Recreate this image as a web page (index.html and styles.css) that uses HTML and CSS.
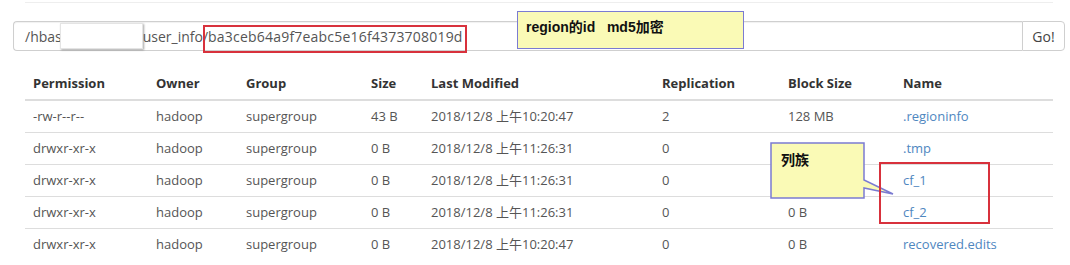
FILE: index.html
```html
<!DOCTYPE html>
<html lang="zh">
<head>
<meta charset="utf-8">
<title>HDFS Browse Directory</title>
<link rel="stylesheet" href="styles.css">
</head>
<body>
<div class="container">
  <div class="rule"></div>
  <div class="input-group">
    <div class="path-input"><span>/hbas</span><span class="redact"></span><span>user_info/</span><span class="hash">ba3ceb64a9f7eabc5e16f4373708019d</span></div>
    <button class="go-btn" type="button">Go!</button>
    <div class="mark mark-hash"></div>
    <div class="note note-region">region的id   md5加密</div>
  </div>
  <div class="table-wrap">
    <table class="listing">
      <colgroup>
        <col style="width:123px"><col style="width:90px"><col style="width:125px"><col style="width:60px">
        <col style="width:231px"><col style="width:126px"><col style="width:115px"><col style="width:158px">
      </colgroup>
      <thead>
        <tr><th>Permission</th><th>Owner</th><th>Group</th><th>Size</th><th>Last Modified</th><th>Replication</th><th>Block Size</th><th>Name</th></tr>
      </thead>
      <tbody>
        <tr><td>-rw-r--r--</td><td>hadoop</td><td>supergroup</td><td>43 B</td><td>2018/12/8 上午10:20:47</td><td>2</td><td>128 MB</td><td><a href="#">.regioninfo</a></td></tr>
        <tr><td>drwxr-xr-x</td><td>hadoop</td><td>supergroup</td><td>0 B</td><td>2018/12/8 上午11:26:31</td><td>0</td><td>0 B</td><td><a href="#">.tmp</a></td></tr>
        <tr><td>drwxr-xr-x</td><td>hadoop</td><td>supergroup</td><td>0 B</td><td>2018/12/8 上午11:26:31</td><td>0</td><td>0 B</td><td><a href="#">cf_1</a></td></tr>
        <tr><td>drwxr-xr-x</td><td>hadoop</td><td>supergroup</td><td>0 B</td><td>2018/12/8 上午11:26:31</td><td>0</td><td>0 B</td><td><a href="#">cf_2</a></td></tr>
        <tr><td>drwxr-xr-x</td><td>hadoop</td><td>supergroup</td><td>0 B</td><td>2018/12/8 上午10:20:47</td><td>0</td><td>0 B</td><td><a href="#">recovered.edits</a></td></tr>
      </tbody>
    </table>
    <svg class="note-cf" width="126" height="58" viewBox="0 0 126 58" aria-hidden="true">
      <path d="M1 1 H94 V38 L123 52 L94 46 V56 H1 Z" fill="#fafab6" stroke="#7b7bd2" stroke-width="1.5" stroke-linejoin="miter"/>
    </svg>
    <div class="note-cf-text">列族</div>
    <div class="mark mark-cf"></div>
  </div>
</div>
</body>
</html>
```

FILE: styles.css
```css
* { box-sizing: border-box; }

html, body {
  margin: 0;
  padding: 0;
  background: #fff;
}

body {
  font-family: "Open Sans", "Noto Sans CJK SC", sans-serif;
  font-size: 13px;
  color: #555;
}

.container {
  width: 1028px;
  margin-left: 25px;
}

.rule {
  margin-top: 2px;
  border-top: 1px solid #eeeeee;
}

.input-group {
  position: relative;
  display: flex;
  height: 30px;
  margin: 18px -12px 0 -12px;
}

.path-input {
  flex: 1;
  display: flex;
  align-items: center;
  border: 1px solid #cfcfcf;
  border-right: none;
  border-radius: 4px 0 0 4px;
  padding: 0 11px;
  font-size: 14px;
  color: #555;
  white-space: nowrap;
  box-shadow: inset 0 1px 1px rgba(0, 0, 0, 0.06);
}

.hash {
  letter-spacing: 0.2px;
}

.redact {
  display: inline-block;
  width: 83px;
  height: 26px;
  margin-left: -2px;
  background: #fff;
  border: 1px solid #e4e4e4;
  box-shadow: 1px 1px 2px rgba(0, 0, 0, 0.35);
}

.go-btn {
  width: 43px;
  border: 1px solid #cfcfcf;
  border-radius: 0 4px 4px 0;
  background: #fff;
  font-family: "Open Sans", sans-serif;
  font-size: 14px;
  color: #444;
  padding: 0;
}

.mark {
  position: absolute;
  border: 2px solid #d8313c;
}

.mark-hash {
  left: 190px;
  top: 4px;
  width: 264px;
  height: 28px;
}

.note-region {
  position: absolute;
  left: 504px;
  top: -10px;
  width: 227px;
  height: 38px;
  background: #fafab6;
  border: 1.5px solid #7b7bd2;
  padding: 4px 0 0 8px;
  font-family: "Liberation Sans", "Noto Sans CJK SC", sans-serif;
  font-weight: bold;
  font-size: 14px;
  color: #111;
  white-space: pre;
}

.table-wrap {
  position: relative;
  margin-top: 18px;
}

.listing {
  width: 1028px;
  table-layout: fixed;
  border-collapse: collapse;
  border-spacing: 0;
}

.listing th,
.listing td {
  text-align: left;
  padding: 8px 8px;
  line-height: 15px;
  white-space: nowrap;
}

.listing th {
  padding-top: 7px;
  font-weight: bold;
  color: #333;
  border-bottom: 2px solid #dddddd;
}

.listing tbody tr + tr td {
  border-top: 1px solid #dddddd;
}

.listing a {
  color: #4f87bf;
  text-decoration: none;
}

.note-cf {
  position: absolute;
  left: 745px;
  top: 73px;
}

.note-cf-text {
  position: absolute;
  left: 756px;
  top: 80px;
  font-family: "Liberation Sans", "Noto Sans CJK SC", sans-serif;
  font-weight: bold;
  font-size: 14px;
  color: #111;
}

.mark-cf {
  left: 854px;
  top: 93px;
  width: 111px;
  height: 62px;
}
```
